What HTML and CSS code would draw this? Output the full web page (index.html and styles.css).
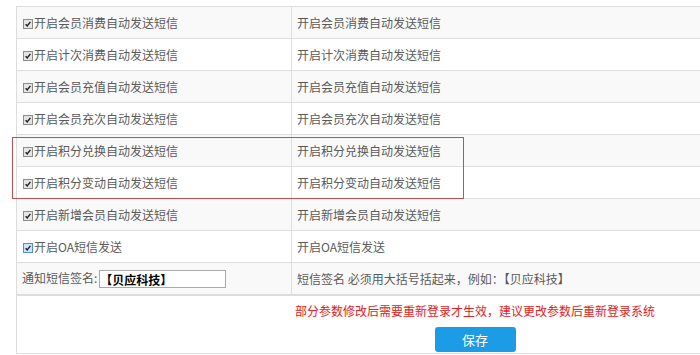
FILE: index.html
```html
<!DOCTYPE html>
<html>
<head>
    <meta charset="UTF-8">
    <title>短信设置</title>
    <link rel="stylesheet" href="styles.css">
</head>
<body>
    <div class="wrap">
        <table class="setting">
            <tbody>
                <tr>
                    <td class="name"><span class="chk"><svg viewBox="0 0 10 10"><path d="M2 5.2 L4 7.4 L8 2.4" /></svg></span>开启会员消费自动发送短信</td>
                    <td>开启会员消费自动发送短信</td>
                </tr>
                <tr>
                    <td class="name"><span class="chk"><svg viewBox="0 0 10 10"><path d="M2 5.2 L4 7.4 L8 2.4" /></svg></span>开启计次消费自动发送短信</td>
                    <td>开启计次消费自动发送短信</td>
                </tr>
                <tr>
                    <td class="name"><span class="chk"><svg viewBox="0 0 10 10"><path d="M2 5.2 L4 7.4 L8 2.4" /></svg></span>开启会员充值自动发送短信</td>
                    <td>开启会员充值自动发送短信</td>
                </tr>
                <tr>
                    <td class="name"><span class="chk"><svg viewBox="0 0 10 10"><path d="M2 5.2 L4 7.4 L8 2.4" /></svg></span>开启会员充次自动发送短信</td>
                    <td>开启会员充次自动发送短信</td>
                </tr>
                <tr>
                    <td class="name"><span class="chk"><svg viewBox="0 0 10 10"><path d="M2 5.2 L4 7.4 L8 2.4" /></svg></span>开启积分兑换自动发送短信</td>
                    <td>开启积分兑换自动发送短信</td>
                </tr>
                <tr>
                    <td class="name"><span class="chk"><svg viewBox="0 0 10 10"><path d="M2 5.2 L4 7.4 L8 2.4" /></svg></span>开启积分变动自动发送短信</td>
                    <td>开启积分变动自动发送短信</td>
                </tr>
                <tr>
                    <td class="name"><span class="chk"><svg viewBox="0 0 10 10"><path d="M2 5.2 L4 7.4 L8 2.4" /></svg></span>开启新增会员自动发送短信</td>
                    <td>开启新增会员自动发送短信</td>
                </tr>
                <tr>
                    <td class="name"><span class="chk focus"><svg viewBox="0 0 10 10"><path d="M2 5.2 L4 7.4 L8 2.4" /></svg></span>开启OA短信发送</td>
                    <td>开启OA短信发送</td>
                </tr>
                <tr>
                    <td class="sign">通知短信签名:<input type="text" class="sign-input" value="【贝应科技】"></td>
                    <td>短信签名 必须用大括号括起来，例如：【贝应科技】</td>
                </tr>
            </tbody>
            <tbody>
                <tr>
                    <td colspan="2" class="foot">
                        <div class="tip">部分参数修改后需要重新登录才生效，建议更改参数后重新登录系统</div>
                        <button class="btn-save">保存</button>
                    </td>
                </tr>
            </tbody>
        </table>

        <!-- highlight box drawn over the two points rows -->
        <div class="mark"></div>
    </div>
</body>
</html>
```

FILE: styles.css
```css
html, body {
    margin: 0;
    overflow: hidden;
    background: #fff;
}

.wrap {
    position: relative;
    padding: 6px 0 0 16px;
    font-family: "Noto Sans CJK SC", "Microsoft YaHei", sans-serif;
    font-size: 12px;
    color: #5a5a5a;
}

.setting {
    border-collapse: collapse;
    width: 926px;
}

.setting td {
    border: 1px solid #ddd;
    height: 31px;
    padding: 0 5px;
    vertical-align: middle;
    white-space: nowrap;
}

.setting td.name {
    width: 264px;
}

/* striped rows */
.setting tbody:first-child tr:nth-child(odd) td {
    background: #f9f9f9;
}

.setting tbody + tbody td {
    border-top: 2px solid #ddd;
}

.chk {
    display: inline-block;
    width: 8px;
    height: 8px;
    border: 1px solid #8c8c8c;
    background: #e4e4e4;
    margin: 0 1px 0 1px;
    vertical-align: -1px;
}

.chk svg {
    display: block;
    width: 8px;
    height: 8px;
}

.chk path {
    fill: none;
    stroke: #222;
    stroke-width: 1.8;
}

.chk.focus {
    border-color: #4a8fd8;
    background: #cfe2f6;
}

.sign-input {
    width: 123px;
    height: 16px;
    padding: 0 2px 0 0;
    margin: 0 0 0 2px;
    border: 1px solid #a9a9a9;
    font-family: inherit;
    font-size: 12px;
    font-weight: bold;
    color: #000;
    vertical-align: middle;
}

.foot {
    text-align: center;
    padding: 5px 0 1px 0 !important;
    height: auto !important;
}

.tip {
    color: #e0221b;
    line-height: 20px;
    margin-left: -8px;
}

.btn-save {
    margin-top: 6px;
    width: 81px;
    height: 25px;
    border: none;
    border-radius: 3px;
    background: #1c9be6;
    color: #fff;
    font-family: inherit;
    font-size: 13px;
    margin-left: -8px;
}

.mark {
    position: absolute;
    left: 12px;
    top: 137px;
    width: 450px;
    height: 60px;
    border: 1px solid #c0504d;
}
```
